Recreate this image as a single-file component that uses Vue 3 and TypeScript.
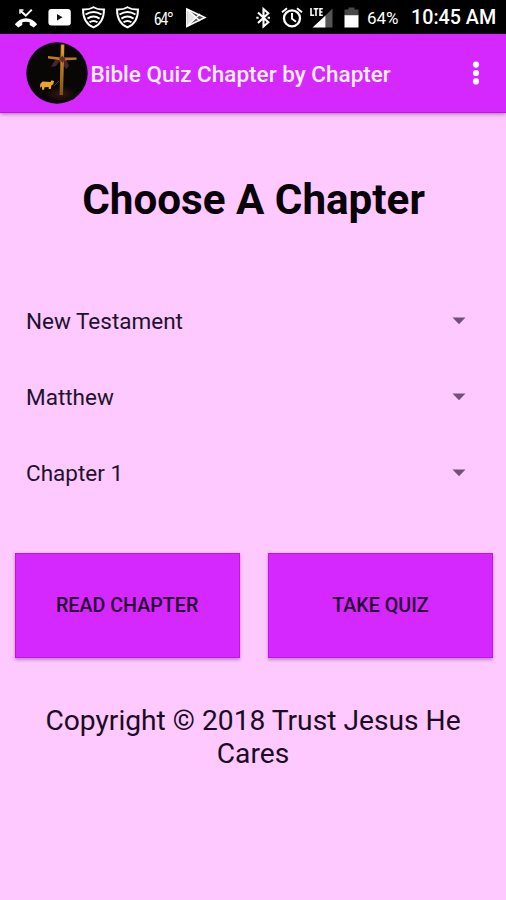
<script setup lang="ts">
import { ref } from 'vue'

interface Choice {
  id: string
  label: string
}

const choices = ref<Choice[]>([
  { id: 'testament', label: 'New Testament' },
  { id: 'book', label: 'Matthew' },
  { id: 'chapter', label: 'Chapter 1' },
])
const actions: string[] = ['Read Chapter', 'Take Quiz']
</script>

<template>
  <div class="screen">
    <header class="status">
      <div class="status-left">
        <svg class="i24" viewBox="0 0 24 36">
          <path d="M6.500 10.800 11.800 15.600 17.800 9.600" fill="none" stroke="#fff" stroke-width="2" />
          <path d="M6 13.800V10H9.500" fill="none" stroke="#fff" stroke-width="1.500" />
          <path d="M.8 24.200C4 20.400 7.800 18.300 12 18.300s8 2.100 11.200 5.900L19.800 27.400 15.700 24.900V22.300c-2.300-.8-5.100-.8-7.400 0v2.600L4.200 27.400Z" fill="#fff" />
        </svg>
        <svg class="i24" viewBox="0 0 24 36">
          <rect x=".4" y="9" width="22.400" height="16.500" rx="3" fill="#fff" />
          <path d="M9 14v6.500l5.500-3.250Z" fill="#111" />
        </svg>
        <svg v-for="n in 2" :key="n" class="i24" viewBox="0 0 24 36">
          <path d="M11.500 7.200C8.500 9 4.800 9.700 1 9.500 1 18.500 4 24.300 11.500 27.400 19 24.300 22 18.500 22 9.500 18.200 9.700 14.500 9 11.500 7.200Z" fill="none" stroke="#fff" stroke-width="1.900" />
          <path d="M3.500 14.500c5-3.200 11-3.200 16 0M5.400 18.600c4-2.700 8.200-2.700 12.200 0M7.500 22.300c2.600-1.800 5.400-1.800 8 0" fill="none" stroke="#fff" stroke-width="1.900" />
        </svg>
        <span class="temp">64°</span>
        <svg class="i24" viewBox="0 0 24 36">
          <path d="M.8 9 19 17.500.8 26.500Z" fill="#555" stroke="#fff" stroke-width="1.500" />
          <path d="M1.300 9.500 10.500 17.500 1.300 26Z" fill="#e4e4e4" />
          <path d="M1.300 9.500 14 21M1.300 26 14 14" stroke="#fff" stroke-width="1.500" />
        </svg>
      </div>
      <div class="status-right">
        <svg class="i-bt" viewBox="0 0 16 36">
          <path d="M2 12.500 12.300 22.300 7.500 26.500V9l4.800 4.200L2 23" fill="none" stroke="#fff" stroke-width="2.100" />
          <path d="M.3 17.700h2.400M11.600 17.700h2.400" stroke="#fff" stroke-width="2" />
        </svg>
        <svg class="i-alarm" viewBox="0 0 22 36">
          <circle cx="11" cy="18.300" r="8" fill="none" stroke="#fff" stroke-width="2.300" />
          <path d="M11 13v5.700l4 3M1 12.200l5-4M21 12.200l-5-4" fill="none" stroke="#fff" stroke-width="1.900" />
        </svg>
        <svg class="i-signal" viewBox="0 0 24 36">
          <path d="M22.500 8.500V27.500H15.500V15.500Z" fill="#555" />
          <path d="M2.500 27.500 15.500 15.500v12Z" fill="#fff" />
          <path d="M1 8v7.200H4.200M3.600 8.800H8.400M6 8.800V16M12.800 8.800H10V15.200H12.800M10 12H12.500" fill="none" stroke="#fff" stroke-width="1.600" />
        </svg>
        <svg class="i-battery" viewBox="0 0 16 36">
          <path d="M.5 9.500H4.500V7.500h6v2H14.500v6H.5Z" fill="#484848" />
          <path d="M.5 15.200H14.500V27.500H.5Z" fill="#fff" />
        </svg>
        <span class="percent">64%</span>
        <span class="clock">10:45 AM</span>
      </div>
    </header>

    <div class="appbar">
      <svg class="logo" viewBox="0 0 62 62">
        <defs>
          <linearGradient id="wood" x1="0" y1="0" x2="0" y2="1">
            <stop offset="0" stop-color="#d8921f" />
            <stop offset=".5" stop-color="#b37522" />
            <stop offset="1" stop-color="#83501c" />
          </linearGradient>
          <radialGradient id="ground">
            <stop offset="0" stop-color="#351812" />
            <stop offset="1" stop-color="#080706" />
          </radialGradient>
        </defs>
        <circle cx="31" cy="31" r="30.700" fill="#080706" />
        <ellipse cx="35" cy="52" rx="16" ry="8" fill="url(#ground)" />
        <path d="M29 18 25 25l5-1 3-4 3 1 4 6 3-3-3-7Z" fill="#4b2432" />
        <path d="M34.800 2.500h3.600L37 53h-3.400Z" fill="url(#wood)" />
        <path d="M22 14 35 15.500H50.500v2.300L36 18.500 22 16.500Z" fill="#bd7c20" />
        <path d="M33 16.500 36.500 14l3 3-3 4Z" fill="#593022" />
        <path d="M36.800 3v9" stroke="#f0b24a" stroke-width=".8" />
        <path d="M14.200 42 16.500 39.500l8 .5 1-1.700 2.500.8-.7 3.200-1.800.9-.7 3.800h-2l-.3-2-4 .2-.4 2.500h-2l-.3-3.500-1.800 1.500Z" fill="#eda42a" />
        <path d="M28 44 33 39" stroke="#5b3518" />
      </svg>
      <h1>Bible Quiz Chapter by Chapter</h1>
      <svg class="more" viewBox="0 0 8 24">
        <circle cx="4" cy="3.600" r="3.100" />
        <circle cx="4" cy="12" r="3.100" />
        <circle cx="4" cy="20.400" r="3.100" />
      </svg>
    </div>

    <main>
      <h2>Choose A Chapter</h2>
      <div class="choices">
        <div v-for="choice in choices" :key="choice.id" class="choice">
          <span>{{ choice.label }}</span>
          <svg viewBox="0 0 14 8"><path d="M.5 .5H13.500L7 7.300Z" /></svg>
        </div>
      </div>
      <div class="actions">
        <button v-for="action in actions" :key="action" type="button">{{ action }}</button>
      </div>
      <p>Copyright © 2018 Trust Jesus He Cares</p>
    </main>
  </div>
</template>

<style>
body {
  margin: 0;
  background: #fdc9ff;
}
</style>

<style scoped>
.screen {
  height: 900px;
  overflow: hidden;
  background: #fdc9ff;
  color: #111;
  font-family: Roboto, "Liberation Sans", sans-serif;
}
svg {
  display: block;
  flex: none;
}
.status {
  display: flex;
  justify-content: space-between;
  height: 34px;
  padding: 0 10px 0 14px;
  background: #000;
  color: #fff;
}
.status-left,
.status-right {
  display: flex;
  align-items: flex-start;
}
.status-left {
  gap: 10px;
}
.status svg {
  height: 36px;
}
.i24 {
  width: 24px;
}
.temp {
  width: 22px;
  margin-left: 4px;
  font-family: "Open Sans", Roboto, sans-serif;
  font-stretch: 75%;
  font-size: 18px;
  line-height: 36px;
  letter-spacing: -1.2px;
}
.i-bt {
  width: 16px;
  margin-right: 9px;
}
.i-alarm {
  width: 22px;
  margin-right: 7px;
}
.i-signal {
  width: 24px;
  margin-right: 10px;
}
.i-battery {
  width: 16px;
  margin-right: 7px;
}
.percent {
  width: 44px;
  font-size: 17px;
  line-height: 36px;
}
.clock {
  width: 85px;
  font-size: 19.700px;
  font-weight: 500;
  line-height: 36px;
  white-space: nowrap;
}
.appbar {
  display: flex;
  align-items: center;
  height: 79px;
  box-sizing: border-box;
  padding: 0 26px 0 26px;
  background: #d528ff;
  border-bottom: 1px solid #be12e6;
  box-shadow: 0 1px 4px rgba(80, 20, 90, 0.5);
}
.logo {
  width: 62px;
  height: 62px;
}
h1 {
  flex: 1;
  margin: 2px 0 0 2.500px;
  color: #fff0ff;
  font-size: 22.500px;
  font-weight: 500;
  line-height: 28px;
  white-space: nowrap;
}
.more {
  width: 8px;
  height: 24px;
  fill: #fff;
}
h2 {
  margin: 0;
  padding: 62px 0 0 1px;
  color: #080208;
  font-size: 42.200px;
  font-weight: 700;
  line-height: 50px;
  text-align: center;
}
.choices {
  padding: 58px 40px 0 26px;
}
.choice {
  display: flex;
  align-items: center;
  justify-content: space-between;
  height: 76px;
  color: #21122b;
  font-size: 22.500px;
}
.choice span {
  padding-bottom: 1px;
}
.choice svg {
  width: 14px;
  height: 8px;
  fill: #745079;
}
.actions {
  display: grid;
  grid-template-columns: 1fr 1fr;
  gap: 28px;
  padding: 41.500px 13px 0 14.500px;
}
button {
  height: 105px;
  padding: 1px 0 0;
  border: 1px solid #c80fee;
  background: #d528ff;
  box-shadow: 0 2px 3px rgba(80, 20, 90, 0.35);
  color: #29052f;
  font-family: inherit;
  font-size: 19.700px;
  font-weight: 500;
  text-transform: uppercase;
}
p {
  margin: 46.500px 36px 0;
  color: #1b0c22;
  font-size: 28.200px;
  line-height: 33px;
  text-align: center;
}
</style>
